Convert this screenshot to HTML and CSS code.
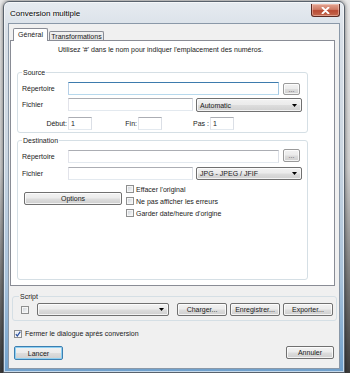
FILE: index.html
```html
<!DOCTYPE html>
<html lang="fr">
<head>
<meta charset="utf-8">
<title>Conversion multiple</title>
<link rel="stylesheet" href="styles.css">
</head>
<body>
<div class="screen">
  <div class="window">
    <div class="titlebar">
      <span class="title">Conversion multiple</span>
      <div class="close"><svg width="9" height="7" viewBox="0 0 9 7"><path d="M1.5 0.5 L7.5 6.5 M7.5 0.5 L1.5 6.5" stroke="#fff" stroke-width="1.8" stroke-linecap="round"/></svg></div>
    </div>
    <div class="client">
      <div class="tabs">
        <div class="tab active">Général</div>
        <div class="tab">Transformations</div>
      </div>
      <div class="panel">
        <p class="hint">Utilisez '#' dans le nom pour indiquer l'emplacement des numéros.</p>
        <fieldset class="group source">
          <legend>Source</legend>
          <div class="row r1">
            <span class="lbl">Répertoire</span>
            <input class="field focus wide" type="text" value="">
            <button class="btn dots">...</button>
          </div>
          <div class="row r2">
            <span class="lbl">Fichier</span>
            <input class="field mid" type="text" value="">
            <div class="combo"><span>Automatic</span><svg width="5" height="3" viewBox="0 0 5 3"><path d="M0 0H5L2.5 3Z" fill="#000"/></svg></div>
          </div>
          <div class="row r3">
            <span class="lbl rt l-debut">Début:</span>
            <input class="field num" type="text" value="1">
            <span class="lbl rt l-fin">Fin:</span>
            <input class="field num" type="text" value="">
            <span class="lbl rt l-pas">Pas :</span>
            <input class="field num" type="text" value="1">
          </div>
        </fieldset>
        <fieldset class="group dest">
          <legend>Destination</legend>
          <div class="row r1">
            <span class="lbl">Répertoire</span>
            <input class="field wide" type="text" value="">
            <button class="btn dots up">...</button>
          </div>
          <div class="row r2b">
            <span class="lbl">Fichier</span>
            <input class="field mid" type="text" value="">
            <div class="combo short"><span>JPG - JPEG / JFIF</span><svg width="5" height="3" viewBox="0 0 5 3"><path d="M0 0H5L2.5 3Z" fill="#000"/></svg></div>
          </div>
          <div class="opts">
            <button class="btn options">Options</button>
            <div class="checks">
              <label class="chk"><span class="cb"></span>Effacer l'original</label>
              <label class="chk"><span class="cb"></span>Ne pas afficher les erreurs</label>
              <label class="chk"><span class="cb"></span>Garder date/heure d'origine</label>
            </div>
          </div>
        </fieldset>
      </div>
      <fieldset class="group script">
        <legend>Script</legend>
        <div class="row srow">
          <span class="cb"></span>
          <div class="combo blank"><span></span><svg width="5" height="3" viewBox="0 0 5 3"><path d="M0 0H5L2.5 3Z" fill="#000"/></svg></div>
          <div class="sbtns">
            <button class="btn sbtn">Charger...</button>
            <button class="btn sbtn">Enregistrer...</button>
            <button class="btn sbtn">Exporter...</button>
          </div>
        </div>
      </fieldset>
      <label class="chk fermer"><span class="cb checked"><svg width="6" height="6" viewBox="0 0 6 6"><path d="M0.8 3.2 L2.3 5 L5.3 0.6" stroke="#2a4f9e" stroke-width="1.2" fill="none"/></svg></span>Fermer le dialogue après conversion</label>
      <div class="footer">
        <button class="btn lancer">Lancer</button>
        <button class="btn annuler">Annuler</button>
      </div>
    </div>
  </div>
</div>
</body>
</html>
```

FILE: styles.css
```css
* { box-sizing: border-box; }
html, body { margin: 0; padding: 0; }
body {
  width: 350px;
  height: 373px;
  overflow: hidden;
  font-family: "Liberation Sans", Arial, sans-serif;
  font-size: 7px;
  color: #1a1a1a;
  background: linear-gradient(#e9e9e9 0%, #cfcfcf 45%, #7a7a7a 75%, #3c3c3c 100%);
}
.screen { padding: 1px 0 0 3px; }
.window {
  width: 342px;
  height: 372px;
  border: 1px solid #59626c;
  border-radius: 6px 6px 0 0;
  padding: 0 4px 3px 4px;
  display: flex;
  flex-direction: column;
  background: linear-gradient(#e6ebf0 0%, #d9e0e8 8%, #ccd7e2 40%, #a9c3dc 75%, #6fa0cc 100%);
  box-shadow: 0 0 4px rgba(0,0,0,0.55), inset 0 0 0 1px rgba(255,255,255,0.6);
}
.titlebar {
  height: 21px;
  display: flex;
  align-items: center;
  justify-content: space-between;
  padding-left: 2px;
}
.title {
  font-size: 8px;
  color: #000;
  text-shadow: 0 0 3px #fff, 0 0 2px #fff;
  margin-top: 1px;
}
.close {
  align-self: flex-start;
  margin-top: 2px;
  width: 29px;
  height: 13px;
  border: 1px solid #5b2a22;
  border-top: none;
  border-radius: 0 0 3px 3px;
  background: linear-gradient(#e4a592 0%, #cf7b65 45%, #b94a33 55%, #c46a4f 100%);
  box-shadow: inset 0 0 0 1px rgba(255,220,210,0.45);
  display: flex;
  align-items: center;
  justify-content: center;
}
.client {
  flex: 1;
  border: 1px solid #8a98a8;
  background: #f0f0f0;
  display: flex;
  flex-direction: column;
  padding-top: 4px;
}
.tabs {
  display: flex;
  align-items: flex-end;
  margin-left: 4px;
  margin-bottom: -1px;
  height: 13px;
}
.tab {
  height: 10px;
  border: 1px solid #898c95;
  border-bottom: none;
  border-radius: 2px 2px 0 0;
  background: linear-gradient(#f2f2f2, #e3e3e3);
  display: flex;
  align-items: center;
  justify-content: center;
  font-size: 7px;
}
.tab.active {
  width: 35px;
  height: 13px;
  background: #fff;
  position: relative;
  z-index: 1;
  padding-bottom: 1px;
}
.tab:not(.active) {
  width: 55px;
  margin-left: 1px;
}
.panel {
  margin-left: 1px;
  width: 325px;
  height: 246px;
  border: 1px solid #898c95;
  background: #fff;
  display: flex;
  flex-direction: column;
  align-items: flex-start;
}
.hint {
  margin: 4px 0 0 0;
  padding-left: 47px;
  line-height: 9px;
  height: 9px;
}
.group {
  margin: 0;
  border: 1px solid #d5dfe5;
  border-radius: 3px;
  min-width: 0;
}
.group legend {
  padding: 0 1px;
  line-height: 9px;
  height: 9px;
}
.source {
  margin: 14px 0 0 6px;
  width: 291px;
  padding: 5px 0 2px 4px;
}
.dest {
  margin: 3px 0 0 6px;
  width: 291px;
  padding: 5px 0 60px 4px;
}
.row {
  display: flex;
  align-items: flex-start;
  height: 13px;
}
.r2 { margin-top: 3px; height: 14px; }
.r3 { margin-top: 5px; }
.r2b { margin-top: 4px; }
.lbl {
  width: 46px;
  line-height: 13px;
  white-space: nowrap;
}
.lbl.rt { text-align: right; padding-right: 1px; }
.l-fin { width: 46px; }
.l-pas { width: 48px; }
.field {
  height: 13px;
  border: 1px solid;
  border-color: #abadb3 #dbdfe6 #e3e9ef #e2e3ea;
  background: #fff;
  font-family: "Liberation Sans", Arial, sans-serif;
  font-size: 7px;
  padding: 0 2px;
  margin: 0;
  outline: none;
  color: #1a1a1a;
}
.field.focus { border-color: #3d7bad #a4c9e3 #b7d9ed #b5cfe7; }
.wide { width: 211px; }
.mid { width: 125px; }
.num { width: 24px; }
.btn {
  height: 13px;
  margin: 0;
  padding: 0;
  border: 1px solid #707070;
  border-radius: 2px;
  background: linear-gradient(#f2f2f2 0%, #ebebeb 48%, #dddddd 52%, #cfcfcf 100%);
  box-shadow: inset 0 0 0 1px rgba(255,255,255,0.75);
  font-family: "Liberation Sans", Arial, sans-serif;
  font-size: 7px;
  color: #1a1a1a;
  display: flex;
  align-items: center;
  justify-content: center;
  line-height: 1;
}
.dots {
  width: 17px;
  height: 12px;
  margin: 1px 0 0 4px;
  color: #555;
  border-color: #9a9a9a;
  align-items: flex-start;
  padding-top: 2px;
}
.dots.up { margin-top: -1px; height: 13px; }
.combo {
  width: 106px;
  height: 14px;
  margin-left: 3px;
  border: 1px solid #707070;
  border-radius: 2px;
  background: linear-gradient(#f2f2f2 0%, #ebebeb 48%, #dddddd 52%, #cfcfcf 100%);
  box-shadow: inset 0 0 0 1px rgba(255,255,255,0.75);
  display: flex;
  align-items: center;
  justify-content: space-between;
  padding: 0 4px 0 3px;
}
.combo.short { height: 13px; }
.opts {
  display: flex;
  margin-top: 3px;
}
.options {
  width: 98px;
  margin: 9px 0 0 2px;
}
.checks {
  display: flex;
  flex-direction: column;
  margin-left: 4px;
}
.chk {
  display: flex;
  align-items: center;
  height: 12px;
  white-space: nowrap;
}
.cb {
  width: 8px;
  height: 8px;
  flex: none;
  border: 1px solid #8e8f8f;
  background: linear-gradient(135deg, #c9ced4 0%, #eef0f2 70%, #fbfbfb 100%);
  box-shadow: inset 0 0 0 1px #f6f6f6;
  margin-right: 2px;
  display: flex;
  align-items: center;
  justify-content: center;
}
.script {
  margin: 6px 0 0 3px;
  width: 325px;
  padding: 2px 0 4px 6px;
}
.srow { align-items: center; }
.srow .cb { margin: 0 8px 0 2px; }
.combo.blank {
  width: 132px;
  height: 13px;
  margin-left: 0;
}
.sbtns {
  display: flex;
  gap: 3px;
  margin-left: 8px;
}
.sbtn { width: 50px; }
.fermer {
  margin: 8px 0 0 5px;
  height: 9px;
}
.fermer .cb { margin-right: 3px; }
.cb.checked { background: linear-gradient(135deg, #dfe6f0, #fbfbfb); }
.footer {
  display: flex;
  justify-content: space-between;
  padding: 0 5px;
  margin-top: 8px;
}
.lancer {
  width: 49px;
  height: 14px;
  border-color: #3c7fb1;
  box-shadow: inset 0 0 0 1px #8fd0f2;
}
.annuler { width: 48px; }
```
